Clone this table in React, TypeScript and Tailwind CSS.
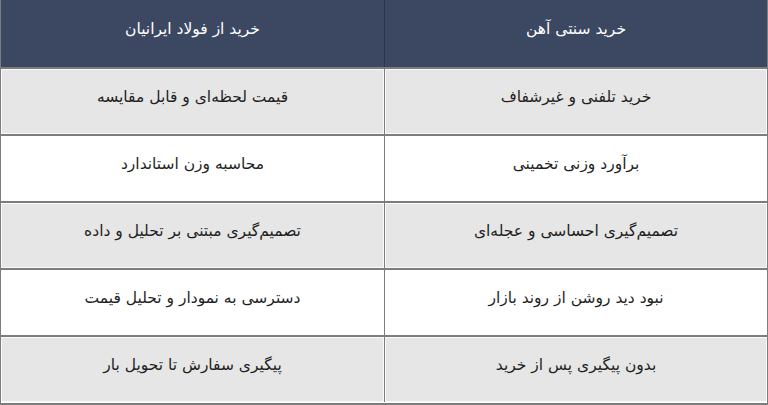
const rows: [string, string][] = [
  ['خرید تلفنی و غیرشفاف', 'قیمت لحظه‌ای و قابل مقایسه'],
  ['برآورد وزنی تخمینی', 'محاسبه وزن استاندارد'],
  ['تصمیم‌گیری احساسی و عجله‌ای', 'تصمیم‌گیری مبتنی بر تحلیل و داده'],
  ['نبود دید روشن از روند بازار', 'دسترسی به نمودار و تحلیل قیمت'],
  ['بدون پیگیری پس از خرید', 'پیگیری سفارش تا تحویل بار'],
];

export default function App() {
  return (
    <div
      dir="rtl"
      className="w-[768px] h-[405px] bg-white overflow-hidden border-x border-b-2 border-[#7d7d7d] text-[15.5px]"
      style={{ fontFamily: '"DejaVu Sans", "Noto Sans", sans-serif' }}
    >
      {/* header */}
      <div className="grid grid-cols-2 h-[67px] bg-[#3c4862] text-white">
        <div className="flex items-center justify-center pb-2 border-l border-[#2c3548]">خرید سنتی آهن</div>
        <div className="flex items-center justify-center pb-2">خرید از فولاد ایرانیان</div>
      </div>

      {rows.map(([a, b], i) => {
        const gray = i % 2 === 0;
        return (
          <div key={i} className="grid grid-cols-2 h-[67px] border-t-2 border-[#7d7d7d] text-[#1f1f1f]">
            <div
              className={
                gray
                  ? 'flex items-center justify-center pb-2 border-l border-[#7d7d7d] bg-[#e6e6e6] shadow-[inset_0_0_0_1px_#fafafa]'
                  : 'flex items-center justify-center pb-2 border-l border-[#7d7d7d] bg-white'
              }
            >
              {a}
            </div>
            <div
              className={
                gray
                  ? 'flex items-center justify-center pb-2 bg-[#e6e6e6] shadow-[inset_0_0_0_1px_#fafafa]'
                  : 'flex items-center justify-center pb-2 bg-white'
              }
            >
              {b}
            </div>
          </div>
        );
      })}
    </div>
  );
}
